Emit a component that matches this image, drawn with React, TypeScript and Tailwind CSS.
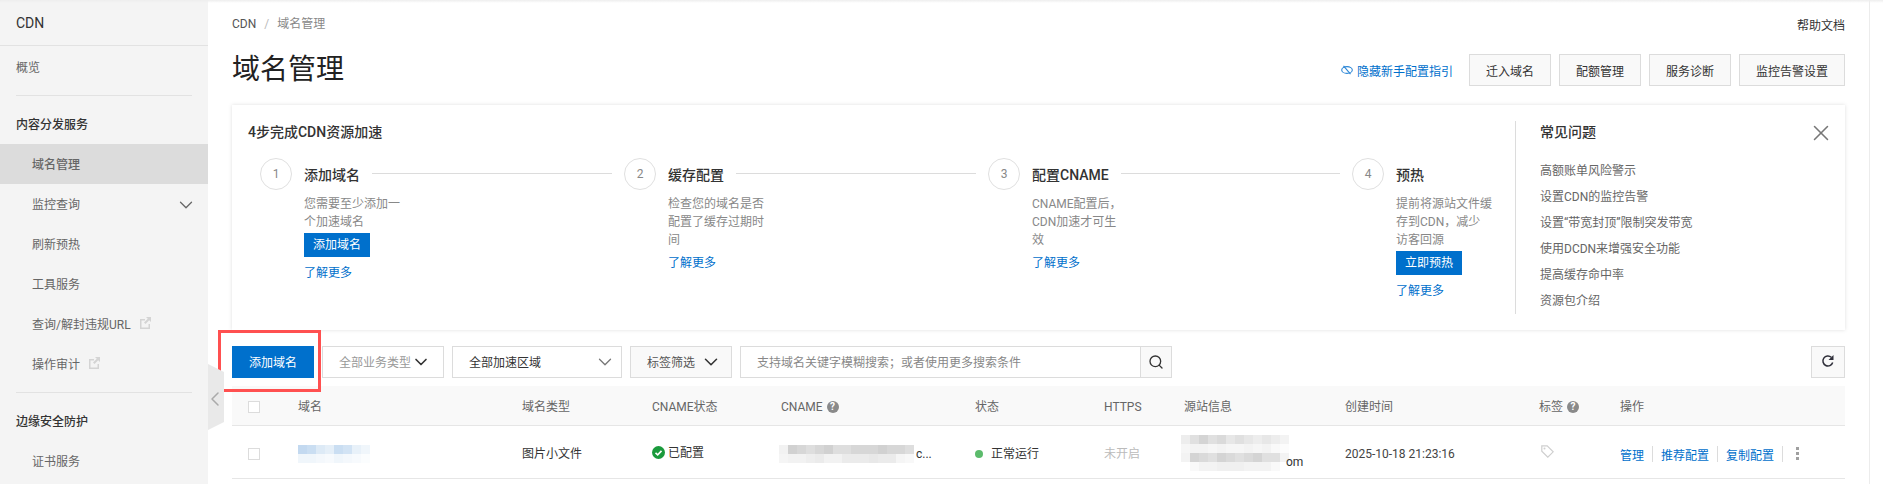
import { ChevronDown, ChevronLeft, Search, X } from "lucide-react";

const font = "font-['Roboto','Noto_Sans_CJK_SC',sans-serif]";
const cols = "grid grid-cols-[66px_224px_130px_129px_194px_129px_80px_161px_194px_81px_1fr]";

const steps = [
  { n: 1, title: "添加域名", desc: ["您需要至少添加一", "个加速域名"], btn: "添加域名", line: true },
  { n: 2, title: "缓存配置", desc: ["检查您的域名是否", "配置了缓存过期时", "间"], line: true },
  { n: 3, title: "配置CNAME", desc: ["CNAME配置后，", "CDN加速才可生", "效"], line: true },
  { n: 4, title: "预热", desc: ["提前将源站文件缓", "存到CDN，减少", "访客回源"], btn: "立即预热", line: false },
];

const faqs = [
  "高额账单风险警示",
  "设置CDN的监控告警",
  "设置“带宽封顶”限制突发带宽",
  "使用DCDN来增强安全功能",
  "提高缓存命中率",
  "资源包介绍",
];

function ExtIcon() {
  return (
    <svg width="12" height="12" viewBox="0 0 12 12" className="ml-2 mb-1">
      <path d="M1 2h5v1.500H2.500v7h7V7H11v5H1z" fill="#d4d4d4" />
      <path d="M7 0h5v5l-1.800-1.800L6.500 7 5 5.500l3.800-3.700z" fill="#d4d4d4" />
    </svg>
  );
}

function Help() {
  return (
    <span className="ml-1 w-3 h-3 rounded-full bg-[#8a8a8a] text-white text-[10px] leading-3 text-center font-bold inline-block">
      ?
    </span>
  );
}

function NavItem({ label, active, ext, arrow }: { label: string; active?: boolean; ext?: boolean; arrow?: boolean }) {
  return (
    <div className={`h-10 pt-[2px] pl-8 pr-4 flex items-center text-xs text-[#666] ${active ? "bg-[#dcdcdc] text-[#333] font-medium" : ""}`}>
      <span>{label}</span>
      {ext && <ExtIcon />}
      {arrow && <ChevronDown className="ml-auto -mr-[5px] w-[22px] h-[22px] text-[#666]" strokeWidth={1.4} />}
    </div>
  );
}

// redacted text in the screenshot: small tinted squares
function Mosaic({ rows, color, size }: { rows: number[][]; color: string; size: number }) {
  return (
    <div className="flex flex-col blur-[0.6px]">
      {rows.map((row, i) => (
        <div key={i} className="flex">
          {row.map((v, j) => (
            <div key={j} style={{ width: size, height: size, backgroundColor: color, opacity: v }} />
          ))}
        </div>
      ))}
    </div>
  );
}

function Sidebar() {
  return (
    <aside className="w-[208px] shrink-0 bg-[#f4f4f4] h-full">
      <div className="h-[46px] border-b border-[#e2e2e2] pl-4 flex items-center text-sm text-[#333]">CDN</div>
      <div className="h-[44px] pl-4 flex items-center text-xs text-[#666]">概览</div>
      <div className="mx-4 mt-[5px] border-t border-[#e2e2e2]" />
      <div className="h-10 pt-[2px] mt-2 pl-4 flex items-center text-xs font-medium text-[#333]">内容分发服务</div>
      <NavItem label="域名管理" active />
      <NavItem label="监控查询" arrow />
      <NavItem label="刷新预热" />
      <NavItem label="工具服务" />
      <NavItem label="查询/解封违规URL" ext />
      <NavItem label="操作审计" ext />
      <div className="mx-4 mt-2 border-t border-[#e2e2e2]" />
      <div className="h-10 pt-[2px] mt-2 pl-4 flex items-center text-xs font-medium text-[#333]">边缘安全防护</div>
      <NavItem label="证书服务" />
    </aside>
  );
}

function Step({ s }: { s: (typeof steps)[number] }) {
  return (
    <div className={`flex ${s.line ? "w-[364px] shrink-0" : "flex-1"}`}>
      <div className="w-8 h-[32px] rounded-full border border-[#e0e0e0] flex items-center justify-center text-xs text-[#888] shrink-0">
        {s.n}
      </div>
      <div className="ml-3 flex-1 min-w-0">
        <div className="h-[37px] flex items-start">
          <span className="mt-[7px] text-sm leading-5 font-medium text-[#333] whitespace-nowrap">{s.title}</span>
          {s.line && <div className="mt-[15px] ml-3 mr-3 flex-1 border-t border-[#dcdcdc]" />}
        </div>
        <div className="text-xs leading-[18px] text-[#888]">
          {s.desc.map((d) => (
            <div key={d} className="whitespace-nowrap">{d}</div>
          ))}
        </div>
        {s.btn && (
          <button className="mt-[2px] block h-6 w-[66px] bg-[#0070cc] text-white text-xs">{s.btn}</button>
        )}
        <a className={`${s.btn ? "mt-[7px]" : "mt-[5px]"} block text-xs leading-[18px] text-[#0070cc]`}>了解更多</a>
      </div>
    </div>
  );
}

function Card() {
  return (
    <div className="relative mt-[19px] h-[225px] bg-white shadow-[0_0_4px_rgba(0,0,0,0.13)] flex pl-4 pt-4">
      <div className="w-[1267px] shrink-0">
        <div className="text-sm leading-[22px] font-medium text-[#333]">4步完成CDN资源加速</div>
        <div className="mt-[15px] flex pl-3">
          {steps.map((s) => (
            <Step key={s.n} s={s} />
          ))}
        </div>
      </div>
      <div className="border-l border-[#dcdcdc] pl-6 h-[193px]">
        <div className="text-sm leading-[22px] font-medium text-[#333]">常见问题</div>
        <div className="mt-[15px] flex flex-col">
          {faqs.map((f) => (
            <div key={f} className="h-[26px] flex items-center text-xs text-[#666] whitespace-nowrap">{f}</div>
          ))}
        </div>
      </div>
      <X className="absolute right-[11px] top-[15px] w-[26px] h-[26px] text-[#777]" strokeWidth={1.4} />
    </div>
  );
}

function Toolbar() {
  return (
    <div className="relative mt-4 h-8 flex gap-2 text-xs">
      <button className="w-[82px] h-8 pt-[2px] bg-[#0070cc] text-white">添加域名</button>
      <div className="w-[122px] h-8 pt-[2px] border border-[#dcdcdc] flex items-center pl-4 text-[#999]">
        全部业务类型
        <ChevronDown className="-mt-[3px] w-5 h-5 text-[#333]" strokeWidth={2} />
      </div>
      <div className="w-[170px] h-8 pt-[2px] border border-[#dcdcdc] flex items-center pl-4 pr-[5px] text-[#333]">
        全部加速区域
        <ChevronDown className="-mt-[3px] ml-auto w-[22px] h-[22px] text-[#777]" strokeWidth={1.4} />
      </div>
      <div className="w-[102px] h-8 pt-[2px] border border-[#dcdcdc] bg-[#f9f9f9] flex items-center pl-4 text-[#555]">
        标签筛选
        <ChevronDown className="-mt-[3px] ml-[5px] w-[22px] h-[22px] text-[#333]" strokeWidth={1.7} />
      </div>
      <div className="w-[432px] h-8 border border-[#dcdcdc] flex">
        <div className="flex-1 pt-[2px] pl-4 flex items-center text-[#888]">支持域名关键字模糊搜索；或者使用更多搜索条件</div>
        <div className="w-[31px] border-l border-[#dcdcdc] bg-[#f9f9f9] flex items-center justify-center">
          <Search className="w-4 h-4 text-[#333]" strokeWidth={2} />
        </div>
      </div>
      <div className="ml-auto w-[34px] h-8 border border-[#dcdcdc] bg-[#f9f9f9] flex items-center justify-center">
        <svg width="14" height="14" viewBox="0 0 14 14" className="-mt-[2px]">
          <path d="M11.700 8.500A5 5 0 1 1 10.300 3.300" stroke="#2f2f3a" strokeWidth="1.500" fill="none" />
          <path d="M12.500 1v5h-5z" fill="#2f2f3a" />
        </svg>
      </div>
      <div className="absolute -left-[14px] -top-[16px] w-[103px] h-[62px] border-[3px] border-[#ff5050] pointer-events-none" />
    </div>
  );
}

function Table() {
  return (
    <div className="mt-2 text-xs">
      <div className={`${cols} h-10 pt-[2px] bg-[#f9f9f9] border-b border-[#e6e6e6] items-center text-[#666]`}>
        <div className="pl-4"><div className="w-3 h-3 border border-[#dcdcdc] bg-white" /></div>
        <div>域名</div>
        <div>域名类型</div>
        <div>CNAME状态</div>
        <div className="flex items-center">CNAME<Help /></div>
        <div>状态</div>
        <div>HTTPS</div>
        <div>源站信息</div>
        <div>创建时间</div>
        <div className="flex items-center">标签<Help /></div>
        <div>操作</div>
      </div>
      <div className={`${cols} h-[53px] pt-[3px] border-b border-[#e6e6e6] items-center text-[#333]`}>
        <div className="pl-4"><div className="w-3 h-3 border border-[#dcdcdc]" /></div>
        <Mosaic
          size={9}
          color="#b4d0ec"
          rows={[
            [0.8, 0.7, 0.45, 0.35, 0.7, 0.6, 0.3, 0.2],
            [0.2, 0.2, 0.15, 0.1, 0.2, 0.15, 0.1, 0.05],
          ]}
        />
        <div>图片小文件</div>
        <div className="flex items-center -mt-[2px]">
          <svg width="13" height="13" viewBox="0 0 13 13" className="mr-[3px] shrink-0">
            <circle cx="6.500" cy="6.500" r="6.500" fill="#1a9a3c" />
            <path d="M3.500 6.800l2.200 2.100 3.800-4" stroke="#fff" strokeWidth="1.600" fill="none" />
          </svg>
          已配置
        </div>
        <div className="flex items-center -ml-[2px]">
          <Mosaic
            size={9}
            color="#bdbdbd"
            rows={[
              [0.2, 0.7, 0.6, 0.5, 0.6, 0.7, 0.5, 0.5, 0.6, 0.6, 0.6, 0.7, 0.6, 0.6, 0.5],
              [0.15, 0.2, 0.2, 0.25, 0.3, 0.2, 0.2, 0.3, 0.3, 0.3, 0.35, 0.3, 0.3, 0.15, 0.1],
            ]}
          />
          <span className="ml-[2px] text-[#333]">c...</span>
        </div>
        <div className="flex items-center text-[#333]">
          <span className="w-2 h-2 rounded-full bg-[#5cbb6c] mr-2" />
          正常运行
        </div>
        <div className="text-[#bbb]">未开启</div>
        <div className="flex items-end -ml-[3px] relative -mt-[2px]">
          <Mosaic
            size={9}
            color="#c2c2c2"
            rows={[
              [0.3, 0.5, 0.7, 0.5, 0.6, 0.4, 0.5, 0.4, 0.3, 0.4, 0.3, 0.2],
              [0.15, 0.2, 0.2, 0.15, 0.2, 0.15, 0.15, 0.2, 0.15, 0.2, 0.1, 0.05],
              [0.2, 0.7, 0.6, 0.5, 0.7, 0.6, 0.5, 0.6, 0.7, 0.5, 0.5, 0.2],
              [0, 0.1, 0.2, 0.2, 0.25, 0.25, 0.25, 0.2, 0.2, 0.2, 0.1, 0],
            ]}
          />
          <span className="absolute left-[105px] top-[19px] text-[#333]">om</span>
        </div>
        <div className="whitespace-nowrap text-[#444]">2025-10-18 21:23:16</div>
        <div className="pl-[2px] -mt-1">
          <svg width="13" height="13" viewBox="0 0 13 13">
            <path d="M.800.800h5.400l6 6-5.400 5.400-6-6z" stroke="#cfcfcf" strokeWidth="1.200" fill="none" />
            <circle cx="3.500" cy="3.500" r="1" fill="#cfcfcf" />
          </svg>
        </div>
        <div className="flex items-center mt-[4px] text-[#0070cc] whitespace-nowrap">
          <a>管理</a>
          <span className="mx-2 h-4 border-l border-[#dcdcdc] -mt-1" />
          <a>推荐配置</a>
          <span className="mx-2 h-4 border-l border-[#dcdcdc] -mt-1" />
          <a>复制配置</a>
          <span className="mx-2 h-4 border-l border-[#dcdcdc] -mt-1" />
          <span className="ml-[5px] -mt-[5px] flex flex-col gap-[2px]">
            <span className="w-[3px] h-[3px] bg-[#a0a0a0]" />
            <span className="w-[3px] h-[3px] bg-[#a0a0a0]" />
            <span className="w-[3px] h-[3px] bg-[#a0a0a0]" />
          </span>
        </div>
      </div>
    </div>
  );
}

export default function App() {
  return (
    <div className={`${font} relative w-[1883px] h-[484px] overflow-hidden bg-white flex`}>
      <Sidebar />
      <main className="w-[1662px] px-6 border-r border-[#ececec] h-full">
        <div className="h-[46px] pt-[2px] flex items-center justify-between text-xs">
          <div className="flex items-center">
            <span className="text-[#555]">CDN</span>
            <span className="mx-2 text-[#bbb]">/</span>
            <span className="text-[#888]">域名管理</span>
          </div>
          <span className="text-[#333] mt-1">帮助文档</span>
        </div>
        <div className="mt-2 h-8 flex items-center">
          <h1 className="text-[28px] leading-8 text-[#222]">域名管理</h1>
          <a className="ml-auto flex items-center text-xs text-[#0070cc] pt-[3px]">
            <svg width="12" height="10" viewBox="0 0 12 10" className="mr-[4px] -mt-[3px]">
              <ellipse cx="6" cy="5" rx="5.300" ry="3.400" stroke="#2b86d6" strokeWidth="1.100" fill="none" />
              <path d="M2.500 .800l7 8.400" stroke="#2b86d6" strokeWidth="1.100" />
            </svg>
            隐藏新手配置指引
          </a>
          <div className="ml-4 flex gap-2 text-xs text-[#333]">
            <button className="w-[82px] h-8 pt-[3px] border border-[#dcdcdc] bg-[#f9f9f9]">迁入域名</button>
            <button className="w-[82px] h-8 pt-[3px] border border-[#dcdcdc] bg-[#f9f9f9]">配额管理</button>
            <button className="w-[82px] h-8 pt-[3px] border border-[#dcdcdc] bg-[#f9f9f9]">服务诊断</button>
            <button className="w-[106px] h-8 pt-[3px] border border-[#dcdcdc] bg-[#f9f9f9]">监控告警设置</button>
          </div>
        </div>
        <Card />
        <Toolbar />
        <Table />
      </main>
      {/* top shadow of the console bar */}
      <div className="absolute inset-x-0 top-0 h-[3px] bg-gradient-to-b from-[#eeeeee] to-transparent" />
      {/* sidebar collapse handle */}
      <div className="absolute left-[208px] top-[364px] w-4 h-[66px]">
        <svg width="16" height="66" viewBox="0 0 16 66">
          <polygon points="0,0 16,8 16,58 0,66" fill="#e9e9e9" />
        </svg>
        <ChevronLeft className="absolute -left-[5px] top-[23px] w-6 h-6 text-[#aaa]" strokeWidth={1.5} />
      </div>
    </div>
  );
}
